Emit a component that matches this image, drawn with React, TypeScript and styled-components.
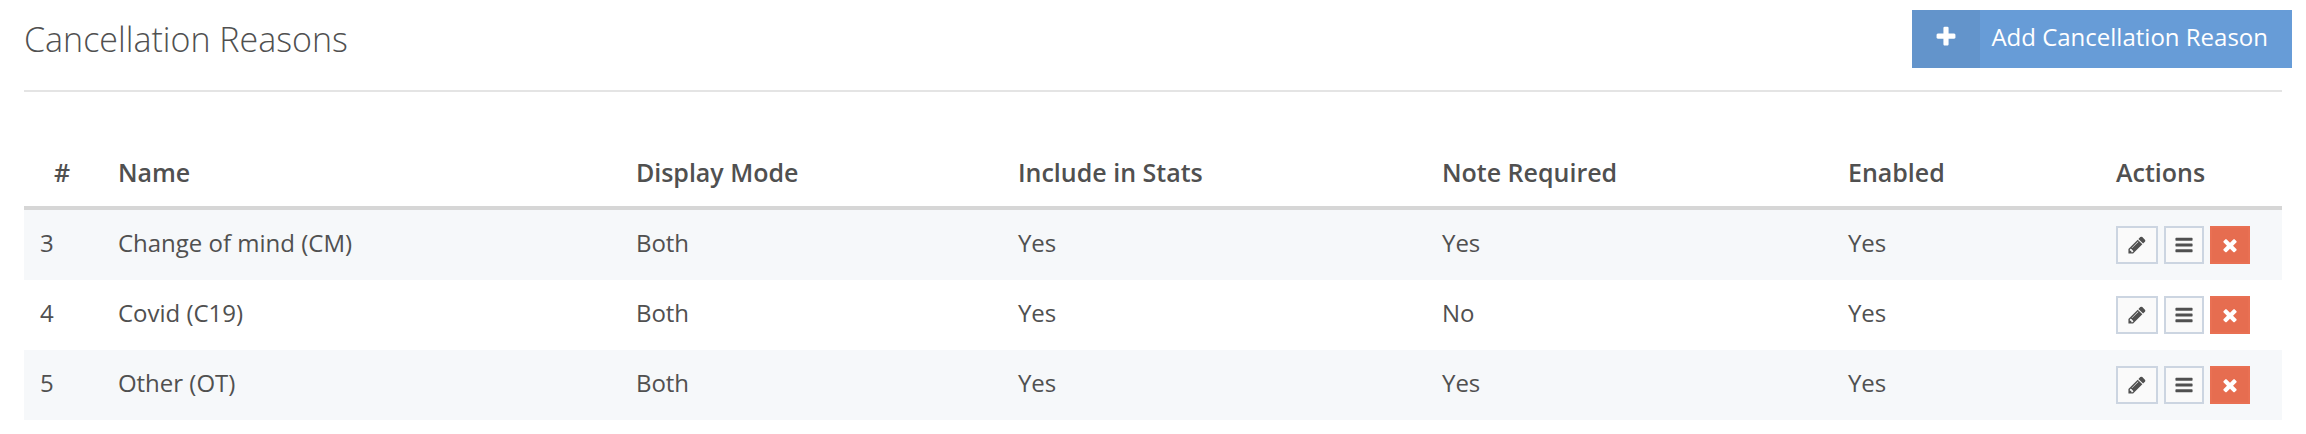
import React from "react";
import styled, { createGlobalStyle } from "styled-components";

const GlobalStyle = createGlobalStyle`
  *, *::before, *::after { box-sizing: border-box; }
  body {
    margin: 0;
    background: #ffffff;
    color: #505050;
    font-family: "Open Sans", "Noto Sans", sans-serif;
    font-size: 24px;
    line-height: 36px;
  }
`;

const Page = styled.main`
  padding: 10px 24px 14px;
`;

const PageHeader = styled.header`
  display: flex;
  align-items: flex-start;
  justify-content: space-between;
  height: 82px;
  margin-bottom: 48px;
  border-bottom: 2px solid #e4e4e4;
`;

const Title = styled.h1`
  margin: 0;
  padding-top: 4px;
  font-size: 34px;
  font-weight: 300;
  line-height: 50px;
`;

const AddButton = styled.button`
  display: flex;
  align-items: center;
  height: 58px;
  margin: 0 -10px 0 0;
  padding: 0;
  border: 0;
  background: #679cd7;
  color: #ffffff;
  font: inherit;
  white-space: nowrap;
  cursor: pointer;
`;

const AddIcon = styled.span`
  display: flex;
  align-items: center;
  justify-content: center;
  align-self: stretch;
  width: 68px;
  padding-bottom: 4px;
  background: #6394cb;
`;

const AddLabel = styled.span`
  padding: 0 24px 4px 11px;
`;

const Table = styled.table`
  width: 100%;
  table-layout: fixed;
  border-collapse: separate;
  border-spacing: 0;
`;

const Column = styled.col<{ $share: number }>`
  width: ${({ $share }) => $share}%;
`;

const HeadCell = styled.th<{ $indent?: boolean }>`
  height: 70px;
  padding: 0 16px 2px ${({ $indent }) => ($indent ? 30 : 16)}px;
  border-bottom: 4px solid #d6d6d6;
  font-size: 25px;
  font-weight: 600;
  text-align: left;
  white-space: nowrap;
`;

const Row = styled.tr`
  &:nth-child(odd) { background: #f6f8fa; }
`;

const Cell = styled.td`
  height: 70px;
  padding: 0 16px 4px;
`;

const ActionCell = styled.td`
  height: 70px;
  padding: 0 16px;
`;

const Actions = styled.div`
  display: flex;
  gap: 6px;
`;

const ActionButton = styled.button<{ $danger?: boolean; $wide?: boolean }>`
  display: flex;
  align-items: center;
  justify-content: center;
  width: ${({ $wide }) => ($wide ? 42 : 40)}px;
  height: 38px;
  padding: 0;
  border: 2px solid ${({ $danger }) => ($danger ? "#e97053" : "#ccd5e1")};
  background: ${({ $danger }) => ($danger ? "#e66d50" : "#fafafa")};
  color: ${({ $danger }) => ($danger ? "#ffffff" : "#505050")};
  cursor: pointer;
`;

const icons = {
  plus: "M1600 736v192q0 40-28 68t-68 28h-416v416q0 40-28 68t-68 28h-192q-40 0-68-28t-28-68v-416h-416q-40 0-68-28t-28-68v-192q0-40 28-68t68-28h416v-416q0-40 28-68t68-28h192q40 0 68 28t28 68v416h416q40 0 68 28t28 68z",
  pencil: "M491 1536l91-91-235-235-91 91v107h128v128h107zm523-928q0-22-22-22-10 0-17 7l-542 542q-7 7-7 17 0 22 22 22 10 0 17-7l542-542q7-7 7-17zm-54-192l416 416-832 832h-416v-416zm683 96q0 53-37 90l-166 166-416-416 166-165q36-38 90-38 53 0 91 38l235 234q37 39 37 91z",
  bars: "M1664 1344v128q0 26-19 45t-45 19h-1408q-26 0-45-19t-19-45v-128q0-26 19-45t45-19h1408q26 0 45 19t19 45zm0-512v128q0 26-19 45t-45 19h-1408q-26 0-45-19t-19-45v-128q0-26 19-45t45-19h1408q26 0 45 19t19 45zm0-512v128q0 26-19 45t-45 19h-1408q-26 0-45-19t-19-45v-128q0-26 19-45t45-19h1408q26 0 45 19t19 45z",
  times: "M1490 1322q0 40-28 68l-136 136q-28 28-68 28t-68-28l-294-294-294 294q-28 28-68 28t-68-28l-136-136q-28-28-28-68t28-68l294-294-294-294q-28-28-28-68t28-68l136-136q28-28 68-28t68 28l294 294 294-294q28-28 68-28t68 28l136 136q28 28 28 68t-28 68l-294 294 294 294q28 28 28 68z",
};

function Icon({ name, size = 20 }: { name: keyof typeof icons; size?: number }) {
  return (
    <svg width={size} height={size} viewBox="0 0 1792 1792" fill="currentColor" aria-hidden="true">
      <path d={icons[name]} />
    </svg>
  );
}

const columns = [
  { label: "#", share: 3.45 },
  { label: "Name", share: 22.94 },
  { label: "Display Mode", share: 16.92 },
  { label: "Include in Stats", share: 18.78 },
  { label: "Note Required", share: 17.98 },
  { label: "Enabled", share: 11.87 },
  { label: "Actions", share: 8.06 },
];

const reasons = [
  { id: 3, name: "Change of mind (CM)", mode: "Both", stats: "Yes", note: "Yes", enabled: "Yes" },
  { id: 4, name: "Covid (C19)", mode: "Both", stats: "Yes", note: "No", enabled: "Yes" },
  { id: 5, name: "Other (OT)", mode: "Both", stats: "Yes", note: "Yes", enabled: "Yes" },
];

export default function App() {
  return (
    <>
      <GlobalStyle />
      <Page>
        <PageHeader>
          <Title>Cancellation Reasons</Title>
          <AddButton type="button">
            <AddIcon><Icon name="plus" size={24} /></AddIcon>
            <AddLabel>Add Cancellation Reason</AddLabel>
          </AddButton>
        </PageHeader>
        <Table>
          <colgroup>
            {columns.map((c) => <Column key={c.label} $share={c.share} />)}
          </colgroup>
          <thead>
            <tr>
              {columns.map((c) => (
                <HeadCell key={c.label} scope="col" $indent={c.label === "#"}>{c.label}</HeadCell>
              ))}
            </tr>
          </thead>
          <tbody>
            {reasons.map((r) => (
              <Row key={r.id}>
                <Cell>{r.id}</Cell>
                <Cell>{r.name}</Cell>
                <Cell>{r.mode}</Cell>
                <Cell>{r.stats}</Cell>
                <Cell>{r.note}</Cell>
                <Cell>{r.enabled}</Cell>
                <ActionCell>
                  <Actions>
                    <ActionButton type="button" $wide aria-label={`Edit ${r.name}`}><Icon name="pencil" /></ActionButton>
                    <ActionButton type="button" aria-label={`Details of ${r.name}`}><Icon name="bars" /></ActionButton>
                    <ActionButton type="button" $danger aria-label={`Delete ${r.name}`}><Icon name="times" /></ActionButton>
                  </Actions>
                </ActionCell>
              </Row>
            ))}
          </tbody>
        </Table>
      </Page>
    </>
  );
}
